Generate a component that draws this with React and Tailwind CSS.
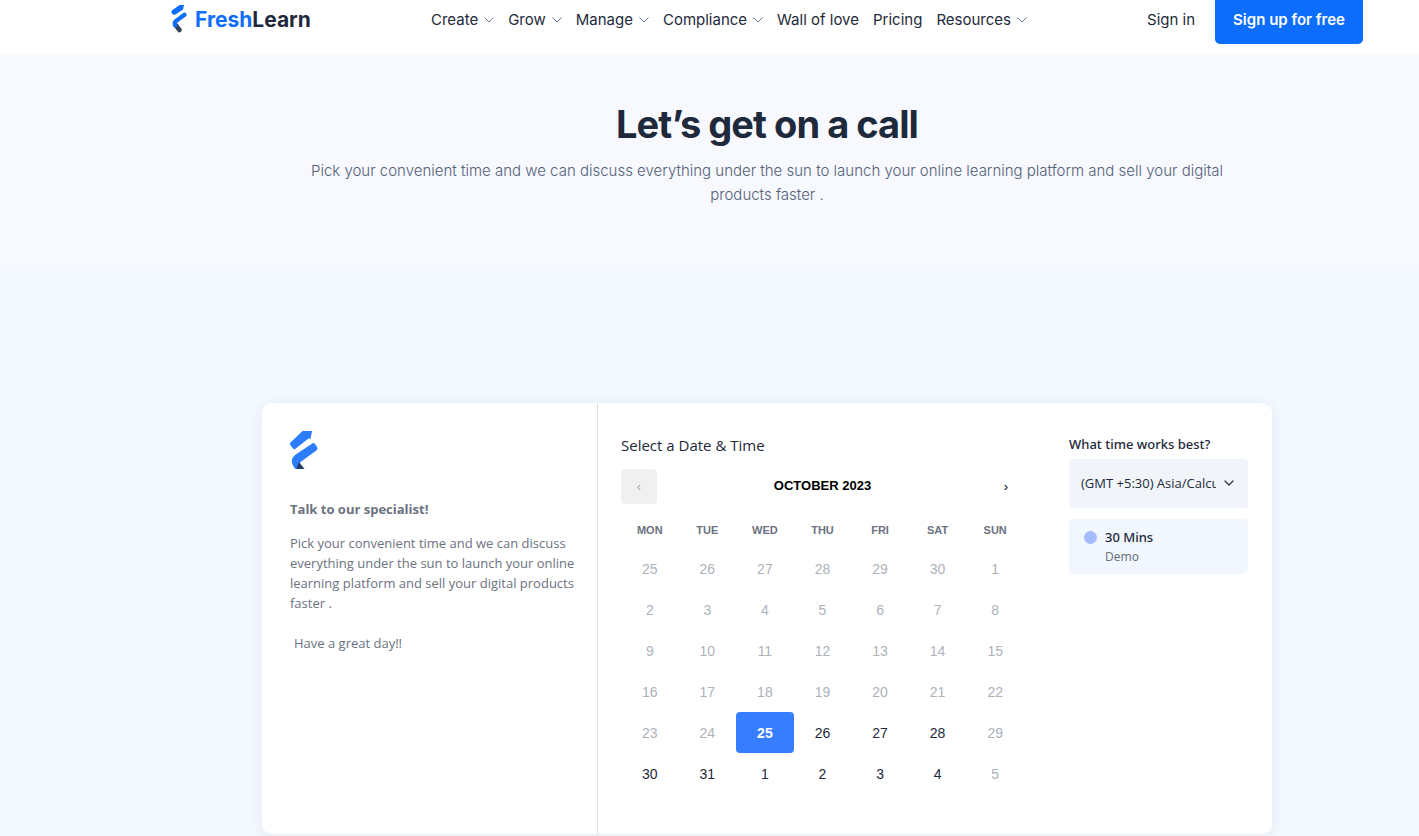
import { useState } from "react";
import { ChevronDown } from "lucide-react";

const navLinks = [
  { label: "Create", menu: true },
  { label: "Grow", menu: true },
  { label: "Manage", menu: true },
  { label: "Compliance", menu: true },
  { label: "Wall of love", menu: false },
  { label: "Pricing", menu: false },
  { label: "Resources", menu: true },
];

const weekdays = ["MON", "TUE", "WED", "THU", "FRI", "SAT", "SUN"];

const weeks = [
  [25, 26, 27, 28, 29, 30, 1],
  [2, 3, 4, 5, 6, 7, 8],
  [9, 10, 11, 12, 13, 14, 15],
  [16, 17, 18, 19, 20, 21, 22],
  [23, 24, 25, 26, 27, 28, 29],
  [30, 31, 1, 2, 3, 4, 5],
];

// open slots as "week-column"
const openDays = [
  "4-2",
  "4-3",
  "4-4",
  "4-5",
  "5-0",
  "5-1",
  "5-2",
  "5-3",
  "5-4",
  "5-5",
];

function Header() {
  return (
    <header className="bg-white pl-[115px]">
      <div className="flex h-[54px] items-start justify-between px-14 text-[15px] text-[#1e293b]">
        <a href="#" className="flex h-[38px] items-center gap-2">
          <svg width="16" height="28" viewBox="0 0 16 28" aria-hidden="true">
            <path d="M5 20.500 8.500 25" stroke="#334155" strokeWidth="4.500" strokeLinecap="round" />
            <path d="M8.500 0H13L12 4.500 4.500 9.500Q2.500 10.500 1 8.500T1.500 5Z" fill="#0d6efd" />
            <path
              d="M13.500 9.800 5 16Q3 17.500 4.200 20.500"
              fill="none"
              stroke="#0d6efd"
              strokeWidth="4.200"
              strokeLinecap="round"
            />
          </svg>
          <span className="text-[21px] font-bold leading-none text-[#0d6efd]">
            Fresh<span className="text-[#1e293b]">Learn</span>
          </span>
        </a>
        <nav className="flex h-10 items-center gap-3.5">
          {navLinks.map((link) => (
            <a key={link.label} href="#" className="flex items-center gap-1.5 whitespace-nowrap">
              {link.label}
              {link.menu ? (
                <svg width="10" height="6" viewBox="0 0 10 6" aria-hidden="true">
                  <path d="M.5.500 5 5 9.500.500" fill="none" stroke="#64748b" />
                </svg>
              ) : null}
            </a>
          ))}
        </nav>
        <div className="flex items-start">
          <a href="#" className="flex h-10 items-center pr-5">
            Sign in
          </a>
          <button
            type="button"
            className="h-11 rounded-b-[5px] bg-[#0d6efd] px-[18px] pb-1 font-semibold text-white"
          >
            Sign up for free
          </button>
        </div>
      </div>
    </header>
  );
}

function EventInfo() {
  return (
    <div className="w-[336px] shrink-0 border-r border-[#dcdee2] pt-7 pr-5 pl-7 text-[13px] leading-5 text-[#6b7280]">
      <svg width="28" height="38" viewBox="0 0 28 38" aria-hidden="true">
        <path d="M12.500 0H22L20.500 8 18.500 7.500 4.500 18.500Q2 17 0 13.500V12Z" fill="#2b7dfb" />
        <path
          d="M23 12Q26 12.500 27.500 17.500L27 19 10.500 31 8 38H5.500Q1 33 2 28.500 2.500 26 5 24Z"
          fill="#2b7dfb"
        />
        <path d="M9 31.500Q10 32 14.500 38H6.500Q7 34 9 31.500Z" fill="#243b63" />
      </svg>
      <h2 className="mt-[30px] font-bold">Talk to our specialist!</h2>
      <p className="mt-[14px]">
        Pick your convenient time and we can discuss everything under the sun to launch your online
        learning platform and sell your digital products faster .
      </p>
      <p className="mt-5 pl-1">Have a great day!!</p>
    </div>
  );
}

function Calendar() {
  const [selected, setSelected] = useState("4-2");

  return (
    <div className="min-w-0 flex-1 pt-[31px]">
      <h2 className="text-[15px] leading-[22px] text-[#1e293b]">Select a Date &amp; Time</h2>
      <div className="mt-[13px] flex h-[35px] items-center justify-between font-['Liberation_Sans',Arial,sans-serif] text-[13px]">
        <button
          type="button"
          disabled
          aria-label="Previous month"
          className="h-[35px] w-9 rounded bg-[#f0f0f0] text-[#aaaaaa]"
        >
          ‹
        </button>
        <span className="pb-0.5 font-bold text-black">OCTOBER 2023</span>
        <button type="button" aria-label="Next month" className="h-[35px] w-9 text-black">
          ›
        </button>
      </div>
      <table className="mt-2 w-full table-fixed font-['Liberation_Sans',Arial,sans-serif]">
        <thead>
          <tr>
            {weekdays.map((day) => (
              <th key={day} className="h-9 p-0 text-[11px] font-bold text-[#6b7280]">
                {day}
              </th>
            ))}
          </tr>
        </thead>
        <tbody>
          {weeks.map((week, row) => (
            <tr key={row}>
              {week.map((day, col) => {
                const id = `${row}-${col}`;
                const open = openDays.includes(id);
                return (
                  <td key={id} className="p-0">
                    <button
                      type="button"
                      disabled={!open}
                      onClick={() => setSelected(id)}
                      className={
                        id === selected
                          ? "block h-[41px] w-full rounded bg-[#377dff] text-sm font-bold text-white"
                          : open
                            ? "block h-[41px] w-full rounded text-sm text-[#1e293b]"
                            : "block h-[41px] w-full rounded text-sm text-[#adb2ba]"
                      }
                    >
                      {day}
                    </button>
                  </td>
                );
              })}
            </tr>
          ))}
        </tbody>
      </table>
    </div>
  );
}

function TimeOptions() {
  return (
    <div className="w-[179px] shrink-0 pt-[31px] font-['Noto_Sans',sans-serif] text-[13px] text-[#1e293b]">
      <label htmlFor="timezone" className="block whitespace-nowrap leading-5 font-medium">
        What time works best?
      </label>
      <div className="relative mt-[5px]">
        <select
          id="timezone"
          className="h-[49px] w-full appearance-none rounded bg-[#f1f5f9] pr-8 pl-3 font-['Open_Sans',sans-serif] text-[#1e293b]"
        >
          <option>(GMT +5:30) Asia/Calcutta</option>
        </select>
        <ChevronDown
          size={16}
          className="pointer-events-none absolute top-4 right-[11px] text-[#343a40]"
        />
      </div>
      <button
        type="button"
        className="mt-[11px] flex h-[55px] w-full items-start gap-2 rounded-[5px] bg-[#f2f6ff] px-[15px] pt-[9px] text-left"
      >
        <span className="mt-[3px] size-[13px] rounded-full bg-[#a4bcfd]"></span>
        <span className="leading-[19px]">
          <span className="block font-medium">30 Mins</span>
          <span className="block text-xs leading-[19px] text-[#6b7280]">Demo</span>
        </span>
      </button>
    </div>
  );
}

function App() {
  return (
    <div className="flex min-h-screen flex-col bg-[#f4f8ff] font-['Inter',sans-serif]">
      <Header />
      <section className="bg-[#f8f9ff] pt-[45px] pb-[62px] pl-[115px] text-center">
        <h1 className="text-[38px] leading-[50px] font-bold tracking-tight text-[#1e293b]">
          Let’s get on a call
        </h1>
        <p className="mx-auto mt-[10px] max-w-[930px] text-[15px] leading-6 font-light text-[#526077]">
          Pick your convenient time and we can discuss everything under the sun to launch your
          online learning platform and sell your digital products faster .
        </p>
      </section>
      <main className="flex-1 pt-[134px] pl-[115px]">
        <div className="mx-auto flex min-h-[431px] max-w-[1010px] rounded-[10px] bg-white pr-6 font-['Open_Sans',sans-serif] shadow-[0_2px_14px_rgba(30,64,120,0.08)]">
          <EventInfo />
          <div className="flex min-w-0 flex-1 gap-[45px] pl-[23px]">
            <Calendar />
            <TimeOptions />
          </div>
        </div>
      </main>
    </div>
  );
}

export default App;
